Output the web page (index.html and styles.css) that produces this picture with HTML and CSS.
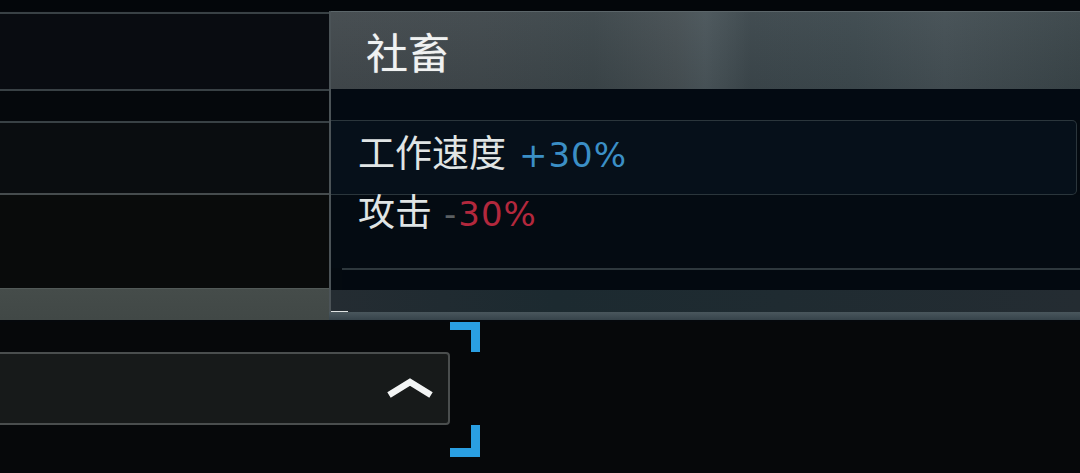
FILE: index.html
```html
<!DOCTYPE html>
<html lang="zh">
<head>
<meta charset="utf-8">
<title>社畜</title>
<link rel="stylesheet" href="styles.css">
</head>
<body>
<div class="screen">
  <div class="top">
    <div class="leftcol">
      <div class="lrow r1"></div>
      <div class="lrow r2"></div>
      <div class="lrow r3"></div>
      <div class="lrow r4"></div>
    </div>
    <div class="panel">
      <div class="panel-head">社畜</div>
      <div class="panel-gap"></div>
      <div class="stat stat-box"><span>工作速度</span><span class="num pos">+30%</span></div>
      <div class="stat stat-plain"><span>攻击</span><span class="num"><span class="minus">-</span><span class="neg">30%</span></span></div>
      <div class="panel-rule"></div>
    </div>
  </div>
  <div class="strip">
    <div class="strip-left"></div>
    <div class="strip-right">
      <div class="strip-band"><span class="dash"></span></div>
      <div class="strip-line"></div>
    </div>
  </div>
  <div class="bottom">
    <div class="dropdown-wrap">
      <div class="dropdown">
        <svg class="chev" width="50" height="24" viewBox="0 0 50 24"><polyline points="4,19 25,6 46,19" fill="none" stroke="#f2f4f4" stroke-width="6.5" stroke-linejoin="miter"/></svg>
      </div>
      <span class="bracket b-top"></span>
      <span class="bracket b-bot"></span>
    </div>
  </div>
</div>
</body>
</html>
```
FILE: styles.css
```css
html, body {
  margin: 0;
  padding: 0;
  background: #04070b;
}
.screen {
  width: 1080px;
  height: 473px;
  overflow: hidden;
  background: #05080c;
  font-family: "Noto Sans CJK SC", "Noto Sans", sans-serif;
  color: #e6eaea;
}
.top {
  display: grid;
  grid-template-columns: 329px 1fr;
  padding-top: 11px;
  height: 279px;
  background: linear-gradient(#03060a 0, #03060a 11px, transparent 11px);
}
.leftcol {
  display: flex;
  flex-direction: column;
  margin-top: 1px;
}
.lrow {
  border-top: 2px solid #394145;
}
.r1 { height: 75px; background: #090c11; }
.r2 { height: 30px; background: #05080c; }
.r3 { height: 70px; background: #0a0d10; }
.r4 { height: 95px; background: #090b0b; border-top-color: #464c4e; }

.panel {
  border-left: 2px solid #4b5357;
  display: flex;
  flex-direction: column;
  background: #040a10;
}
.panel-head {
  border-top: 1px solid #5c666a;
  box-sizing: border-box;
  height: 78px;
  padding-left: 35px;
  display: flex;
  align-items: center;
  font-size: 42px;
  line-height: 1;
  color: #f0f2f2;
  text-shadow: 0 0 1px rgba(255,255,255,0.5);
  background:
    linear-gradient(180deg, rgba(255,255,255,0.03), rgba(0,0,0,0.05)),
    linear-gradient(90deg, #42494d 0%, #40484c 20%, #3c464a 35%, #464f53 46%, #4a555a 50%, #3c474c 56%, #3d494e 70%, #444f54 82%, #3a4549 100%);
}
.panel-gap {
  height: 31px;
  background: #030a12;
}
.stat {
  box-sizing: border-box;
  padding-left: 27px;
  display: flex;
  align-items: baseline;
  font-size: 37px;
  line-height: 1;
  color: #e0e5e5;
  white-space: pre;
}
.num {
  font-family: "DejaVu Sans", sans-serif;
  font-size: 34px;
  letter-spacing: 1px;
  margin-left: 13px;
}
.stat-box {
  height: 75px;
  margin-right: 3px;
  border: 1px solid #2b363c;
  border-left: none;
  border-radius: 0 5px 5px 0;
  background: #06101a;
  padding-top: 12px;
}
.stat-plain {
  height: 73px;
  padding-top: 0;
  line-height: 0.84;
  background: #040b12;
}
.stat-plain .num { margin-left: 12px; }
.pos { color: #3b8fc6; }
.minus { color: #5a5f62; letter-spacing: 2px; }
.neg { color: #b3283d; }
.panel-rule {
  margin-left: 11px;
  border-top: 2px solid #2e383d;
  height: 20px;
  background: #030910;
}
.strip {
  display: flex;
  height: 32px;
}
.strip-left {
  width: 329px;
  margin-top: -2px;
  height: 32px;
  background: linear-gradient(#525a58 0, #525a58 1px, #454c4a 1px, #414846 100%);
}
.strip-right {
  flex: 1;
  display: flex;
  flex-direction: column;
}
.strip-band {
  height: 22px;
  display: flex;
  align-items: flex-end;
  background: linear-gradient(90deg, #242c32 0%, #1c2a30 30%, #1f2b31 60%, #242c32 100%);
  border-left: 2px solid #4b5357;
}
.dash {
  width: 17px;
  height: 2px;
  background: #dfe3e3;
  margin-bottom: -1px;
}
.strip-line {
  height: 8px;
  background: linear-gradient(#4a575d, #36434a);
}
.bottom {
  padding-top: 30px;
  height: 121px;
  background: #06080a;
}
.dropdown-wrap {
  position: relative;
  width: 450px;
}
.dropdown {
  box-sizing: border-box;
  height: 73px;
  margin-left: -4px;
  width: 454px;
  border: 2px solid #4a4e4e;
  border-radius: 0 4px 4px 0;
  background: #171a1a;
  display: flex;
  align-items: center;
  justify-content: flex-end;
  padding-right: 13px;
}
.chev {
  margin-top: -2px;
}
.bracket {
  position: absolute;
  left: 450px;
  width: 30px;
  box-sizing: border-box;
  border-color: #2a9fe2;
  border-style: solid;
  border-width: 0;
}
.b-top {
  top: -30px;
  height: 30px;
  border-top-width: 8px;
  border-right-width: 9px;
}
.b-bot {
  top: 73px;
  height: 32px;
  border-bottom-width: 9px;
  border-right-width: 9px;
}
```
